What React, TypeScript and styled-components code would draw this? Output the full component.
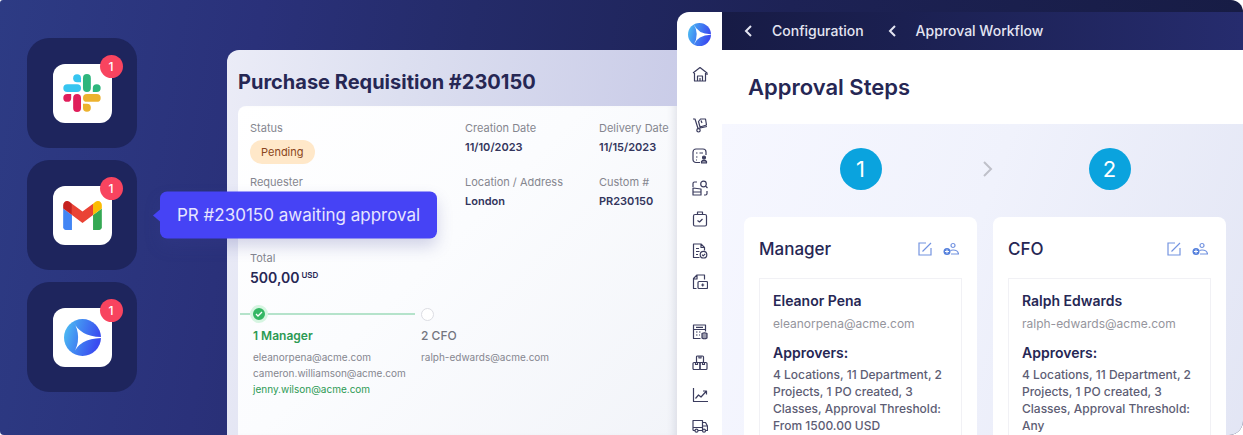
import React from "react";
import styled, { createGlobalStyle } from "styled-components";

const GlobalStyle = createGlobalStyle`
  *, *::before, *::after { box-sizing: border-box; }
  body {
    margin: 0;
    background: #ffffff;
    font-family: Inter, "Liberation Sans", sans-serif;
    color: #262754;
  }
  h1, h2, h3, h4, p, ul, ol, dl, dd { margin: 0; padding: 0; }
  ul, ol { list-style: none; }
  svg { display: block; flex: none; }
`;

const Banner = styled.main`
  display: grid;
  grid-template-columns: 227px minmax(0, 450fr) minmax(0, 566fr);
  height: 100vh;
  overflow: hidden;
  border-radius: 3px 12px 14px 4px;
  background: linear-gradient(100deg, #2d3b84 0%, #2a317a 20%, #242b69 36%, #1d2255 60%, #161b42 100%);
`;

/* App notifications */

const AppColumn = styled.ul`
  display: flex;
  flex-direction: column;
  gap: 12px;
  padding: 38px 0 0 27px;
`;

const AppTile = styled.li`
  position: relative;
  display: grid;
  place-items: center;
  width: 110px;
  height: 110px;
  border-radius: 22px;
  background: #1e255d;
`;

const AppButton = styled.button`
  position: relative;
  display: grid;
  place-items: center;
  width: 59px;
  height: 59px;
  padding: 0;
  border: 0;
  border-radius: 12px;
  background: #ffffff;
`;

const Badge = styled.span`
  position: absolute;
  top: -9px;
  right: -11px;
  width: 23px;
  height: 23px;
  border-radius: 50%;
  background: #f8445f;
  color: #ffffff;
  font: 500 12px/23px Inter, sans-serif;
  text-align: center;
`;

const Tooltip = styled.div`
  position: absolute;
  z-index: 2;
  top: 50%;
  left: 133px;
  transform: translateY(-50%);
  padding: 12px 17px;
  border-radius: 7px;
  background: #4643f5;
  box-shadow: 0 8px 16px rgba(60, 64, 150, 0.22);
  color: #e6e5ff;
  font-size: 17px;
  line-height: 23px;
  white-space: nowrap;

  &::before {
    content: "";
    position: absolute;
    top: 50%;
    left: -7px;
    border: solid transparent;
    border-width: 6px 7px 6px 0;
    border-right-color: #4643f5;
    transform: translateY(-50%);
  }
`;

/* Purchase requisition */

const Requisition = styled.section`
  display: flex;
  flex-direction: column;
  margin-top: 50px;
  padding: 16px 0 0 11px;
  border-radius: 12px 0 0 0;
  background: linear-gradient(100deg, #ebecf7 0%, #dcdff0 35%, #c6c8e6 100%);
`;

const RequisitionTitle = styled.h1`
  font-size: 20px;
  line-height: 32px;
  font-weight: 700;
  white-space: nowrap;
`;

const Sheet = styled.div`
  flex: 1;
  margin-top: 8px;
  padding-top: 14px;
  border-radius: 8px 0 0 0;
  background: linear-gradient(135deg, #ffffff 0%, #fbfcfe 45%, #f2f4f9 100%);
  box-shadow: inset -8px 0 8px -6px rgba(60, 64, 100, 0.14);
`;

const Fields = styled.dl`
  display: grid;
  grid-template-columns: 215px 134px 1fr;
  row-gap: 10px;
  padding-left: 12px;
`;

const Field = styled.div`
  display: flex;
  flex-direction: column;
  align-items: flex-start;
  gap: 4px;
`;

const Label = styled.dt`
  color: #85868f;
  font-size: 11px;
  line-height: 16px;
  white-space: nowrap;
`;

const Value = styled.dd`
  color: #33355c;
  font-size: 11px;
  line-height: 14px;
  font-weight: 600;
`;

const Pill = styled.dd`
  padding: 0 11px;
  border-radius: 12px;
  background: #ffe8c9;
  color: #8a4620;
  font-size: 11px;
  line-height: 24px;
`;

const Total = styled.dl`
  margin-top: 42px;
  padding-left: 12px;
`;

const Amount = styled.dd`
  display: flex;
  align-items: flex-start;
  gap: 2px;
  font-size: 14px;
  line-height: 24px;
  font-weight: 600;
`;

const Currency = styled.span`
  font-size: 8px;
  line-height: 18px;
`;

const Rail = styled.div`
  display: flex;
  align-items: center;
  width: 194px;
  margin: 15px 0 0 2px;
`;

const RailLine = styled.span<{ $grow?: boolean }>`
  flex: ${(p) => (p.$grow ? "1" : "0 0 10px")};
  height: 2px;
  background: #b5e3cb;
`;

const DoneDot = styled.span`
  display: grid;
  place-items: center;
  width: 18px;
  height: 18px;
  border: 3px solid #d6f5e1;
  border-radius: 50%;
  background: #34b764;
`;

const OpenDot = styled.span`
  width: 13px;
  height: 13px;
  margin-left: 6px;
  border: 1px solid #dcdde3;
  border-radius: 50%;
  background: #ffffff;
`;

const Approvers = styled.ol`
  display: grid;
  grid-template-columns: 168px 1fr;
  padding: 3px 0 0 15px;
`;

const ApproverTitle = styled.h2<{ $done?: boolean }>`
  margin-bottom: 3px;
  color: ${(p) => (p.$done ? "#2c9a54" : "#74757f")};
  font-size: 12px;
  line-height: 20px;
  font-weight: ${(p) => (p.$done ? 600 : 500)};
`;

const Mail = styled.p<{ $done?: boolean }>`
  color: ${(p) => (p.$done ? "#2c9a54" : "#85868f")};
  font-size: 10px;
  line-height: 16px;
`;

/* Workflow window */

const Workflow = styled.section`
  display: grid;
  grid-template-columns: 45px minmax(0, 1fr);
  margin-top: 12px;
  border-radius: 12px 0 0 0;
  overflow: hidden;
`;

const Sidebar = styled.nav`
  display: flex;
  flex-direction: column;
  align-items: center;
  padding-top: 11px;
  background: #ffffff;
`;

const IconGroup = styled.div<{ $height: number; $space: number }>`
  display: flex;
  flex-direction: column;
  justify-content: space-between;
  height: ${(p) => p.$height}px;
  margin-top: ${(p) => p.$space}px;
`;

const NavLink = styled.a`
  display: block;
  color: #3b3c5e;
`;

const Main = styled.div`
  display: flex;
  flex-direction: column;
`;

const Crumbs = styled.nav`
  display: flex;
  align-items: center;
  height: 38px;
  padding-left: 22px;
  background: linear-gradient(90deg, #171b45 0%, #1b2051 35%, #262c6e 100%);
`;

const Crumb = styled.a`
  display: flex;
  align-items: center;
  gap: 20px;
  margin-right: 24px;
  color: #e4e5f2;
  font-size: 14px;
  line-height: 20px;
  font-weight: 500;
  text-decoration: none;
  white-space: nowrap;
`;

const TitleBar = styled.header`
  padding: 21px 26px;
  background: #ffffff;
`;

const Title = styled.h1`
  font-size: 22px;
  line-height: 32px;
  font-weight: 600;
`;

const Board = styled.div`
  flex: 1;
  padding: 24px 17px 0 22px;
  background: linear-gradient(110deg, #f6f7ff 0%, #f0f2fc 45%, #e2e5f4 100%);
`;

const Steps = styled.div`
  display: grid;
  grid-template-columns: minmax(0, 1fr) 16px minmax(0, 1fr);
  align-items: center;

  svg {
    justify-self: end;
  }
`;

const StepNumber = styled.span`
  justify-self: center;
  width: 42px;
  height: 42px;
  border-radius: 50%;
  background: #0aa3de;
  color: #ffffff;
  font-size: 22px;
  line-height: 42px;
  text-align: center;
`;

const Cards = styled.div`
  display: grid;
  grid-template-columns: repeat(2, minmax(0, 1fr));
  gap: 16px;
  margin-top: 27px;
`;

const Card = styled.article`
  height: 260px;
  padding: 16px 15px;
  border-radius: 8px;
  background: #ffffff;
`;

const CardHead = styled.header`
  display: flex;
  align-items: center;
  gap: 11px;
  height: 32px;
  padding-right: 3px;
`;

const CardTitle = styled.h2`
  flex: 1;
  font-size: 17px;
  line-height: 24px;
  font-weight: 500;
`;

const IconButton = styled.button`
  padding: 0;
  border: 0;
  background: none;
  color: #7393e0;
`;

const Person = styled.div`
  height: 210px;
  margin-top: 13px;
  padding: 12px 13px;
  border: 1px solid #f1f1f5;
`;

const Strong = styled.h3`
  font-size: 14px;
  line-height: 20px;
  font-weight: 600;
`;

const PersonMail = styled.p`
  margin: 4px 0 10px;
  color: #95959d;
  font-size: 12px;
  line-height: 18px;
`;

const Scope = styled.p`
  margin-top: 3px;
  color: #5d5d74;
  font-size: 12px;
  line-height: 17px;
  font-weight: 500;
`;

/* Drawings */

const SlackLogo = () => (
  <svg width="38" height="38" viewBox="0 0 114 116">
    <g fill="#36c5f0">
      <rect x="0" y="31" width="54" height="24" rx="12" />
      <path d="M54 25H42a12 12 0 1 1 12-12z" />
    </g>
    <g fill="#2eb67d">
      <rect x="60" y="0" width="24" height="55" rx="12" />
      <path d="M90 55V43a12 12 0 1 1 12 12z" />
    </g>
    <g fill="#ecb22e">
      <rect x="60" y="61" width="54" height="24" rx="12" />
      <path d="M60 91h12a12 12 0 1 1-12 12z" />
    </g>
    <g fill="#e01e5a">
      <rect x="30" y="61" width="24" height="55" rx="12" />
      <path d="M24 61v12a12 12 0 1 1-12-12z" />
    </g>
  </svg>
);

const GmailLogo = () => (
  <svg width="39" height="29" viewBox="52 42 88 66">
    <path fill="#4285f4" d="M58 108h14V74L52 59v43c0 3.320 2.690 6 6 6" />
    <path fill="#34a853" d="M120 108h14c3.320 0 6-2.690 6-6V59l-20 15" />
    <path fill="#fbbc04" d="M120 48v26l20-15v-8c0-7.420-8.470-11.650-14.400-7.200" />
    <path fill="#ea4335" d="M72 74V48l24 18 24-18v26L96 92" />
    <path fill="#c5221f" d="M52 51v8l20 15V48l-5.600-4.200c-5.940-4.450-14.400-.22-14.400 7.200" />
  </svg>
);

const BrandLogo = ({ size, id }: { size: number; id: string }) => (
  <svg width={size} height={size} viewBox="0 0 36 36">
    <defs>
      <linearGradient id={id} x1="0" y1="0" x2="1" y2="0.300">
        <stop offset="0" stopColor="#4fc6f2" />
        <stop offset="0.400" stopColor="#4391f2" />
        <stop offset="1" stopColor="#3a4cf0" />
      </linearGradient>
    </defs>
    <circle cx="18" cy="18" r="18" fill={`url(#${id})`} />
    <path fill="#ffffff" d="M9 2Q15 17 36 17.600V18.400Q15 19 9 34Q18.500 18 9 2Z" />
  </svg>
);

const Chevron = ({ back, color }: { back?: boolean; color: string }) => (
  <svg width={back ? 8 : 10} height={back ? 12 : 18} viewBox={back ? "0 0 8 12" : "0 0 10 18"} fill="none" stroke={color} strokeWidth="2">
    <path d={back ? "M7 1 2 6l5 5" : "M1 2l7 7-7 7"} />
  </svg>
);

const shapes: Record<string, React.ReactNode> = {
  Home: <path d="M1 7 8 1.500 15 7v2M2.500 7v8h11V7M5.500 15v-5h5v5M8 15v-3" />,
  Deliveries: (
    <>
      <path d="M1 2h2l3 9.500 9-2M6.500 4.500l2-2.500h5l1 6-6.500 2zM9 3.500l1 2.500" />
      <circle cx="6.500" cy="13.300" r="1.700" />
    </>
  ),
  Requests: (
    <>
      <path d="M8 14.500H4a3 3 0 0 1-3-3V4a3 3 0 0 1 3-3h7a3 3 0 0 1 3 3v3M4 5h1.500M7.500 5H11M4 9h1.500M4 12h1" />
      <circle cx="12" cy="9.500" r="1.500" fill="currentColor" />
      <path fill="currentColor" fillOpacity="0.500" d="M9.500 15v-1.500q2.500-2.500 5 0V15z" />
    </>
  ),
  Sourcing: (
    <>
      <circle cx="11.500" cy="4" r="2.800" />
      <path d="M13.500 6 15.500 8M1 7V3.500A1.500 1.500 0 0 1 2.500 2H5M1 15V8l8 1v6zM1 12h8M15 11v2.500a1.500 1.500 0 0 1-1.500 1.500H12" />
    </>
  ),
  Orders: (
    <>
      <rect x="1.500" y="3.500" width="13" height="11.500" rx="1.500" />
      <path d="M5.500 3.500V1h5v2.500M5.500 9.500 7.500 11l3-3" />
    </>
  ),
  Invoices: (
    <>
      <path d="M7.500 14.500h-6V1h7.500l3.500 3.500v3M9 1v3.500h3.500M4 5.500h3M4 8.500h3.500M4 11.500h2" />
      <circle cx="11.500" cy="11.700" r="3.300" />
      <path d="M10 11.700l1.200 1.200 2-2" />
    </>
  ),
  Payments: (
    <>
      <path d="M4.500 14.500h-3V4.500L5 1h7.500v4.500M1.500 5H5V1" />
      <rect x="6" y="7.500" width="9.500" height="7" rx="1" />
      <path d="M10.700 9.500v3M9.200 11h3" />
    </>
  ),
  Budgets: (
    <>
      <path d="M8.500 14.500h-7V1h12v6.500M1.500 5.500h12M4 3.300h7M4 8h1.500M7 8h1.500M4 11h1.500M7 11h1" />
      <path fill="currentColor" fillOpacity="0.500" d="M10 9.500q2.500-1.500 5 0V14q-2.500 1.500-5 0z" />
    </>
  ),
  Inventory: (
    <>
      <rect x="4.500" y="1" width="7" height="6.500" rx="1" />
      <rect x="1" y="7.500" width="7" height="7" rx="1" />
      <rect x="8" y="7.500" width="7" height="7" rx="1" />
      <path d="M7 1v2h2V1M3.500 7.500v2h2v-2M10.500 7.500v2h2v-2" />
    </>
  ),
  Reports: <path d="M1.500 1v13.500H16M3.500 11.500 6.500 8l2.500 2 5.500-6M11 4h3.500v3.500" />,
  Suppliers: (
    <>
      <path d="M1 12.500V2.500h9.500v10H6M1 12.500h2M1 9.500h9.500M10.500 4.500h3l2 3.500v4.500h-2M10.500 8h5" />
      <circle cx="4.500" cy="12.700" r="1.500" />
      <circle cx="12" cy="12.700" r="1.500" />
    </>
  ),
};

const NavItem = ({ name }: { name: string }) => (
  <NavLink href="#" aria-label={name}>
    <svg width="16" height="16" viewBox="0 0 16 16" fill="none" stroke="currentColor" strokeWidth="1.200" strokeLinejoin="round">
      {shapes[name]}
    </svg>
  </NavLink>
);

const EditIcon = () => (
  <svg width="14" height="14" viewBox="0 0 14 14" fill="none" stroke="currentColor" strokeWidth="1.200">
    <path d="M8 1H1v12h12V6M4.500 9.500 13 1" />
  </svg>
);

const AddUserIcon = () => (
  <svg width="16" height="14" viewBox="0 0 16 14" fill="none" stroke="currentColor" strokeWidth="1.200">
    <circle cx="10" cy="3.500" r="2" />
    <path d="M8 12h7.500q-.5-4-5.500-4-1.500 0-2.500.5" />
    <circle cx="4" cy="9.500" r="3.500" fill="#5580dc" stroke="none" />
    <path stroke="#ffffff" strokeWidth="1" d="M4 7.500v4M2 9.500h4" />
  </svg>
);

/* Content */

const apps = [
  { name: "Slack", logo: <SlackLogo /> },
  { name: "Gmail", logo: <GmailLogo />, message: "PR #230150 awaiting approval" },
  { name: "Procurement", logo: <BrandLogo size={37} id="brand-tile" /> },
];

const scope = "4 Locations, 11 Department, 2 Projects, 1 PO created, 3 Classes, Approval Threshold: ";

const approvalCards = [
  { role: "Manager", person: "Eleanor Pena", mail: "eleanorpena@acme.com", limit: "From 1500.00 USD" },
  { role: "CFO", person: "Ralph Edwards", mail: "ralph-edwards@acme.com", limit: "Any" },
];

const TextField = ({ label, value }: { label: string; value?: string }) => (
  <Field>
    <Label>{label}</Label>
    <Value>{value}</Value>
  </Field>
);

export default function App() {
  return (
    <>
      <GlobalStyle />
      <Banner>
        <AppColumn>
          {apps.map((app) => (
            <AppTile key={app.name}>
              <AppButton aria-label={app.name}>
                {app.logo}
                <Badge>1</Badge>
              </AppButton>
              {app.message && <Tooltip role="tooltip">{app.message}</Tooltip>}
            </AppTile>
          ))}
        </AppColumn>

        <Requisition>
          <RequisitionTitle>Purchase Requisition #230150</RequisitionTitle>
          <Sheet>
            <Fields>
              <Field>
                <Label>Status</Label>
                <Pill>Pending</Pill>
              </Field>
              <TextField label="Creation Date" value="11/10/2023" />
              <TextField label="Delivery Date" value="11/15/2023" />
              <TextField label="Requester" />
              <TextField label="Location / Address" value="London" />
              <TextField label="Custom #" value="PR230150" />
            </Fields>
            <Total>
              <Label>Total</Label>
              <Amount>
                500,00 <Currency>USD</Currency>
              </Amount>
            </Total>
            <Rail>
              <RailLine />
              <DoneDot>
                <svg width="8" height="8" viewBox="0 0 8 8" fill="none" stroke="#ffffff" strokeWidth="1.300">
                  <path d="M1 4l2 2 4-4" />
                </svg>
              </DoneDot>
              <RailLine $grow />
              <OpenDot />
            </Rail>
            <Approvers>
              <li>
                <ApproverTitle $done>1 Manager</ApproverTitle>
                <Mail>eleanorpena@acme.com</Mail>
                <Mail>cameron.williamson@acme.com</Mail>
                <Mail $done>jenny.wilson@acme.com</Mail>
              </li>
              <li>
                <ApproverTitle>2 CFO</ApproverTitle>
                <Mail>ralph-edwards@acme.com</Mail>
              </li>
            </Approvers>
          </Sheet>
        </Requisition>

        <Workflow>
          <Sidebar>
            <BrandLogo size={23} id="brand-nav" />
            <IconGroup $height={16} $space={20}>
              <NavItem name="Home" />
            </IconGroup>
            <IconGroup $height={173} $space={35}>
              {["Deliveries", "Requests", "Sourcing", "Orders", "Invoices", "Payments"].map((n) => (
                <NavItem key={n} name={n} />
              ))}
            </IconGroup>
            <IconGroup $height={110} $space={34}>
              {["Budgets", "Inventory", "Reports", "Suppliers"].map((n) => (
                <NavItem key={n} name={n} />
              ))}
            </IconGroup>
          </Sidebar>
          <Main>
            <Crumbs>
              {["Configuration", "Approval Workflow"].map((crumb) => (
                <Crumb key={crumb} href="#">
                  <Chevron back color="#e4e5f2" />
                  {crumb}
                </Crumb>
              ))}
            </Crumbs>
            <TitleBar>
              <Title>Approval Steps</Title>
            </TitleBar>
            <Board>
              <Steps>
                <StepNumber>1</StepNumber>
                <Chevron color="#bfc0c9" />
                <StepNumber>2</StepNumber>
              </Steps>
              <Cards>
                {approvalCards.map((card) => (
                  <Card key={card.role}>
                    <CardHead>
                      <CardTitle>{card.role}</CardTitle>
                      <IconButton aria-label={`Edit ${card.role}`}>
                        <EditIcon />
                      </IconButton>
                      <IconButton aria-label={`Add approver to ${card.role}`}>
                        <AddUserIcon />
                      </IconButton>
                    </CardHead>
                    <Person>
                      <Strong>{card.person}</Strong>
                      <PersonMail>{card.mail}</PersonMail>
                      <Strong>Approvers:</Strong>
                      <Scope>
                        {scope}
                        {card.limit}
                      </Scope>
                    </Person>
                  </Card>
                ))}
              </Cards>
            </Board>
          </Main>
        </Workflow>
      </Banner>
    </>
  );
}
